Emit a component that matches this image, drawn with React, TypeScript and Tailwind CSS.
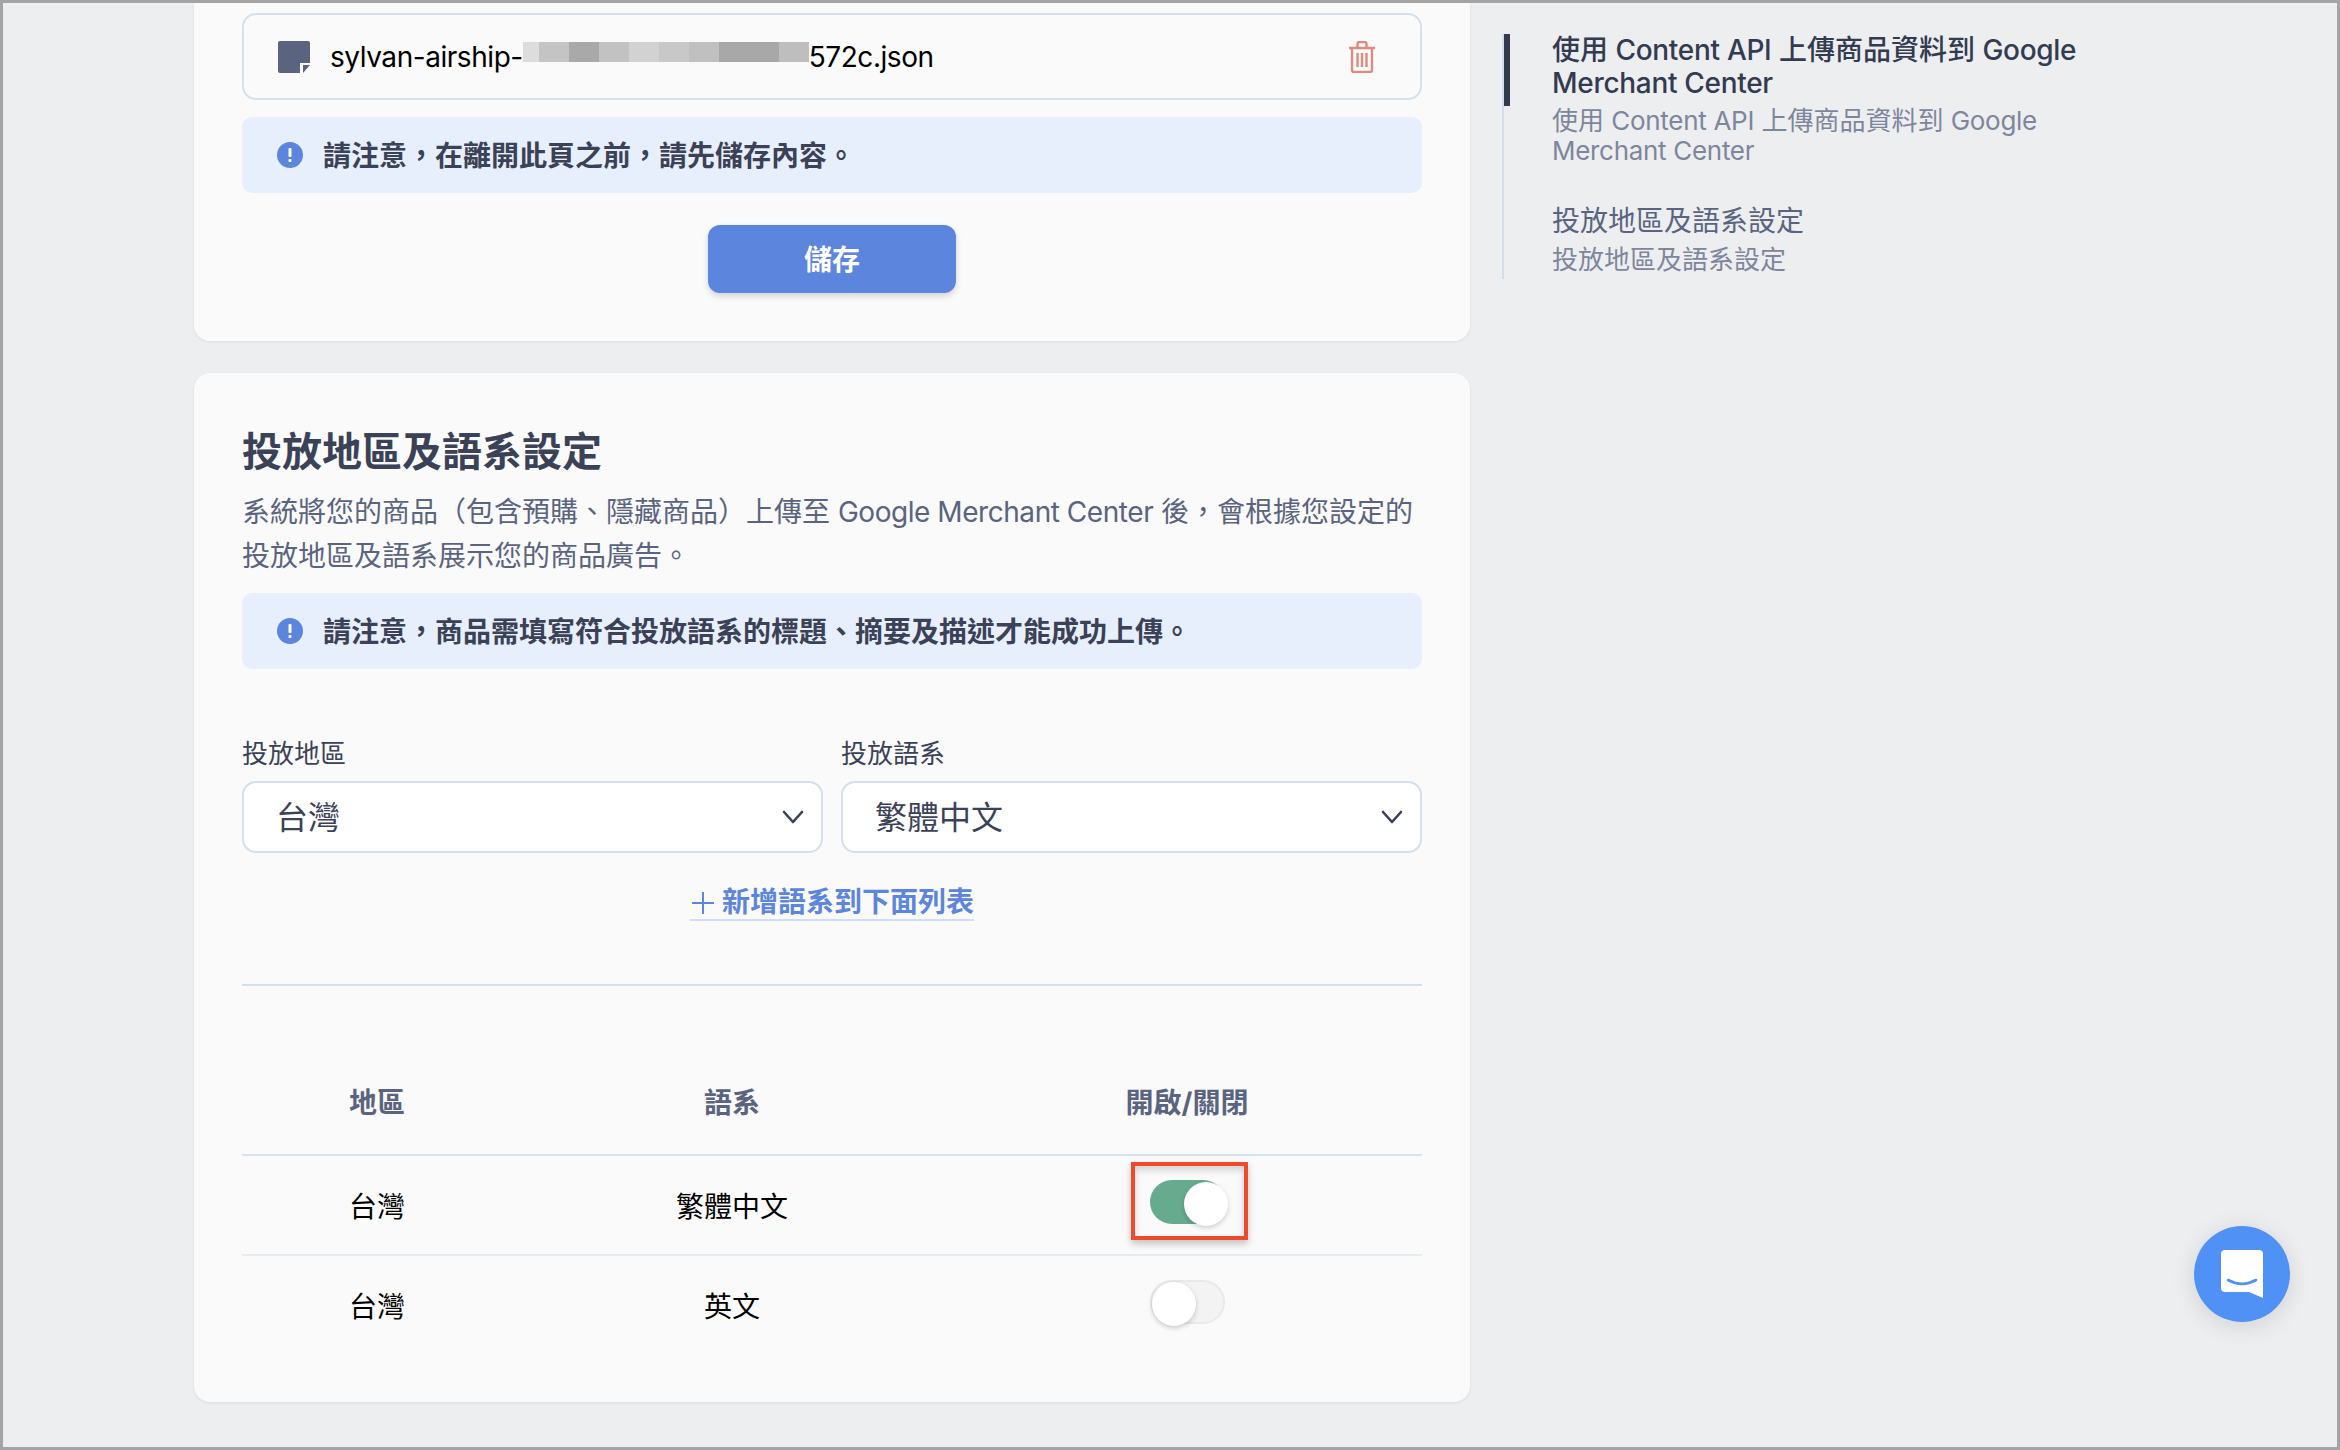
import React from "react";

function L({ children }: { children: React.ReactNode }) {
  return <span className="tracking-[-0.3px]">{children}</span>;
}

function InfoIcon() {
  return (
    <svg width="26" height="26" viewBox="0 0 26 26" className="shrink-0">
      <circle cx="13" cy="13" r="13" fill="#5c85dd" />
      <rect x="11.5" y="6" width="3" height="9" rx="1" fill="#fff" />
      <rect x="11.5" y="17" width="3" height="3" rx="1" fill="#fff" />
    </svg>
  );
}

function Notice({ text }: { text: string }) {
  return (
    <div className="flex h-[76px] items-center gap-[20px] rounded-[10px] bg-[#e8effc] pl-[35px]">
      <InfoIcon />
      <span className="pt-[2px] text-[28px] font-semibold leading-[36px] text-[#3b4257]">{text}</span>
    </div>
  );
}

function Chevron() {
  return (
    <svg width="24" height="14" viewBox="0 0 24 14" fill="none" className="shrink-0">
      <path d="M3 2l9 10 9-10" stroke="#3b4257" strokeWidth="2.6" strokeLinecap="round" strokeLinejoin="round" />
    </svg>
  );
}

function Select({ label, value }: { label: string; value: string }) {
  return (
    <div className="flex-1">
      <div className="pt-[2px] text-[26px] leading-[34px] text-[#3b4257]">{label}</div>
      <div className="mt-[10px] flex h-[72px] items-center justify-between rounded-[14px] border-2 border-[#d5e0ea] bg-white pl-[32px] pr-[16px]">
        <span className="pt-[2px] text-[32px] leading-[40px] text-[#3b4257]">{value}</span>
        <Chevron />
      </div>
    </div>
  );
}

function Toggle({ on, marked }: { on?: boolean; marked?: boolean }) {
  return (
    <div
      className={
        on
          ? "relative -mt-[6px] h-[44px] w-[75px] rounded-full bg-[#67ab8e]"
          : "relative -mt-[6px] h-[44px] w-[75px] rounded-full border-2 border-[#e9e9e9] bg-[#f3f3f3]"
      }
    >
      <div
        className={
          on
            ? "absolute left-[34px] top-[2px] h-[44px] w-[44px] rounded-full bg-white shadow-[0_2px_5px_rgba(0,0,0,0.18)]"
            : "absolute left-[0px] top-[0px] h-[44px] w-[44px] rounded-full bg-white shadow-[0_2px_5px_rgba(0,0,0,0.2)]"
        }
      />
      {marked && (
        <div className="absolute -left-[19px] -top-[18px] h-[78px] w-[117px] border-[4px] border-[#ee4a2c] shadow-[0_4px_7px_rgba(0,0,0,0.22),inset_0_4px_7px_rgba(0,0,0,0.16)]" />
      )}
    </div>
  );
}

function Row({ a, b, on, marked, line }: { a: string; b: string; on?: boolean; marked?: boolean; line?: boolean }) {
  return (
    <div
      className={
        line
          ? "grid h-[100px] grid-cols-[270px_440px_470px] items-center border-b-2 border-[#e6ebf1] text-center text-[28px] text-black"
          : "grid h-[98px] grid-cols-[270px_440px_470px] items-center text-center text-[28px] text-black"
      }
    >
      <div className="pt-[3px]">{a}</div>
      <div className="pt-[3px]">{b}</div>
      <div className="flex justify-center">
        <Toggle on={on} marked={marked} />
      </div>
    </div>
  );
}

export default function App() {
  return (
    <div
      className="relative flex h-[1450px] w-[2340px] overflow-hidden border-[3px] border-[#a4a4a4] bg-[#edeef0]"
      style={{ fontFamily: 'Inter, "Noto Sans CJK TC", sans-serif' }}
    >
      <main className="ml-[191px] flex w-[1276px] shrink-0 flex-col gap-[32px]">
        <section className="rounded-b-[16px] bg-[#fafafa] px-[48px] pb-[48px] pt-[10px] shadow-[0_1px_3px_rgba(0,0,0,0.08)]">
          <div className="flex h-[87px] items-center rounded-[14px] border-2 border-[#d5e0ea] pl-[34px] pr-[44px]">
            <svg width="32" height="32" viewBox="0 0 32 32" className="shrink-0">
              <path d="M2 0h28a2 2 0 012 2v20H22v10H2a2 2 0 01-2-2V2a2 2 0 012-2z" fill="#5a6480" />
              <path d="M25 24h7l-7 8z" fill="#5a6480" />
            </svg>
            <span className="ml-[20px] pt-[1px] text-[28px] leading-[40px] tracking-[-0.45px] text-black">sylvan-airship-</span>
            <div className="-mt-[10px] flex h-[20px]">
              <div className="w-[16px] bg-[#dddddd]" />
              <div className="w-[30px] bg-[#c4c4c4]" />
              <div className="w-[30px] bg-[#a9a9a9]" />
              <div className="w-[30px] bg-[#c2c2c2]" />
              <div className="w-[30px] bg-[#d2d2d2]" />
              <div className="w-[30px] bg-[#c8c8c8]" />
              <div className="w-[30px] bg-[#c0c0c0]" />
              <div className="w-[60px] bg-[#a8a8a8]" />
              <div className="w-[30px] bg-[#bebebe]" />
            </div>
            <span className="pt-[1px] text-[28px] leading-[40px] tracking-[-0.45px] text-black">572c.json</span>
            <svg width="28" height="32" viewBox="0 0 28 32" fill="none" stroke="#dd8b7e" strokeWidth="2.4" className="ml-auto shrink-0">
              <path d="M1 7h26M4 7v22a2 2 0 002 2h16a2 2 0 002-2V7M9.5 7V3a2 2 0 012-2h5a2 2 0 012 2v4M9.5 12v14M14 12v14M18.5 12v14" />
            </svg>
          </div>
          <div className="mt-[17px]">
            <Notice text="請注意，在離開此頁之前，請先儲存內容。" />
          </div>
          <div className="mt-[32px] flex justify-center">
            <button className="h-[68px] w-[248px] rounded-[12px] bg-[#5c85dd] pt-[2px] text-[28px] font-bold text-white shadow-[0_3px_6px_rgba(0,0,0,0.16)]">
              儲存
            </button>
          </div>
        </section>

        <section className="h-[1029px] rounded-[16px] bg-[#fafafa] px-[48px] pt-[53px] shadow-[0_1px_3px_rgba(0,0,0,0.08)]">
          <h2 className="text-[40px] font-bold leading-[52px] text-[#3b4257]">投放地區及語系設定</h2>
          <p className="mt-[12px] text-[28px] leading-[44px] text-[#5a6480]">
            系統將您的商品（包含預購、隱藏商品）上傳至 <span className="tracking-[-0.45px]">Google Merchant Center</span> 後，會根據您設定的投放地區及語系展示您的商品廣告。
          </p>
          <div className="mt-[15px]">
            <Notice text="請注意，商品需填寫符合投放語系的標題、摘要及描述才能成功上傳。" />
          </div>
          <div className="mt-[66px] flex gap-[18px]">
            <Select label="投放地區" value="台灣" />
            <Select label="投放語系" value="繁體中文" />
          </div>
          <div className="mt-[32px] flex justify-center">
            <a className="flex items-center gap-[8px] border-b-2 border-[#cdddfa] pl-[2px] pt-[1px] text-[28px] font-bold leading-[33px] text-[#5c85dd]">
              <svg width="22" height="22" viewBox="0 0 22 22" stroke="#5c85dd" strokeWidth="2" className="shrink-0">
                <path d="M0 11h22M11 0v22" />
              </svg>
              新增語系到下面列表
            </a>
          </div>
          <div className="mt-[63px] h-[2px] bg-[#d5e0ea]" />
          <div className="mt-[89px] grid grid-cols-[270px_440px_470px] border-b-2 border-[#d8e2ec] pb-[25px] pt-[3px] text-center text-[28px] font-bold leading-[51px] text-[#5a6480]">
            <div>地區</div>
            <div>語系</div>
            <div>開啟/關閉</div>
          </div>
          <Row a="台灣" b="繁體中文" on marked line />
          <Row a="台灣" b="英文" />
        </section>
      </main>

      <aside className="ml-[32px] h-[276px] w-[640px] shrink-0 self-start">
        <div className="mt-[31px] flex h-[245px] border-l-2 border-[#d5dde6]">
          <div className="flex flex-col">
            <div className="h-[72px] w-[6px] bg-[#333b50]" />
          </div>
          <div className="ml-[42px] w-[540px]">
            <div className="text-[28px] font-medium leading-[33px] text-[#333b50]">
              使用 <L>Content API</L> 上傳商品資料到 <L>Google Merchant Center</L>
            </div>
            <div className="mt-[6px] text-[26px] leading-[30px] text-[#7d869b]">
              使用 <L>Content API</L> 上傳商品資料到 <L>Google Merchant Center</L>
            </div>
            <div className="mt-[37px] text-[28px] leading-[36px] text-[#5a6480]">投放地區及語系設定</div>
            <div className="mt-[4px] text-[26px] leading-[34px] text-[#7d869b]">投放地區及語系設定</div>
          </div>
        </div>
      </aside>

      <button className="absolute bottom-[125px] right-[47px] flex h-[96px] w-[96px] items-center justify-center rounded-full bg-[#4f91f5] shadow-[0_4px_24px_rgba(0,0,0,0.12)]">
        <svg width="42" height="48" viewBox="0 0 42 48">
          <path d="M4 0h34a4 4 0 014 4v44l-14-6H4a4 4 0 01-4-4V4a4 4 0 014-4z" fill="#fff" />
          <path d="M7 30c9 5 19 5 28 0" fill="none" stroke="#4f91f5" strokeWidth="2.6" strokeLinecap="round" />
        </svg>
      </button>
    </div>
  );
}
